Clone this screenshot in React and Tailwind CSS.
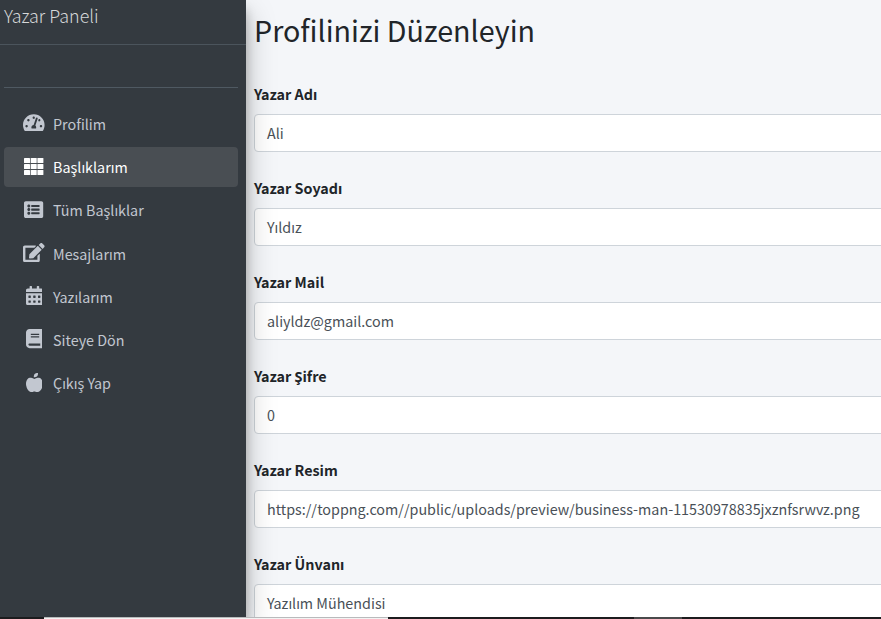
import {
  FaTachometerAlt,
  FaListAlt,
  FaEdit,
  FaCalendarAlt,
  FaBook,
  FaAppleAlt,
} from 'react-icons/fa';

function GridIcon({ className }) {
  const columns = [0, 6.7, 13.4];
  const rows = [0, 6, 12];
  return (
    <svg viewBox="0 0 20 17" className={className} fill="currentColor">
      {rows.map((y) =>
        columns.map((x) => (
          <rect key={`${x}-${y}`} x={x} y={y} width="6" height="5" rx="0.6" />
        )),
      )}
    </svg>
  );
}

const navItems = [
  { label: 'Profilim', Icon: FaTachometerAlt, size: 'h-[19.2px] w-[21.6px]' },
  { label: 'Başlıklarım', Icon: GridIcon, size: 'h-[17px] w-5', active: true },
  { label: 'Tüm Başlıklar', Icon: FaListAlt, size: 'h-[19.2px] w-[19.2px]' },
  { label: 'Mesajlarım', Icon: FaEdit, size: 'h-[19.2px] w-[21.6px]' },
  { label: 'Yazılarım', Icon: FaCalendarAlt, size: 'h-[19.2px] w-[16.8px]' },
  { label: 'Siteye Dön', Icon: FaBook, size: 'h-[19.2px] w-[16.8px]' },
  { label: 'Çıkış Yap', Icon: FaAppleAlt, size: 'h-[19.2px] w-[16.8px]' },
];

const fields = [
  { label: 'Yazar Adı', value: 'Ali' },
  { label: 'Yazar Soyadı', value: 'Yıldız' },
  { label: 'Yazar Mail', value: 'aliyldz@gmail.com' },
  { label: 'Yazar Şifre', value: '0' },
  {
    label: 'Yazar Resim',
    value: 'https://toppng.com//public/uploads/preview/business-man-11530978835jxznfsrwvz.png',
  },
  { label: 'Yazar Ünvanı', value: 'Yazılım Mühendisi' },
];

function NavItem({ label, Icon, size, active }) {
  return (
    <a
      className={
        'flex h-10 items-center rounded pl-4 ' +
        (active ? 'bg-[#494e53] text-white' : 'text-[#c2c7d0]')
      }
    >
      <span className="-mt-0.5 mr-[5px] flex w-7 shrink-0 justify-center">
        <Icon className={size} />
      </span>
      <span className="text-[14.34px] leading-6">{label}</span>
    </a>
  );
}

function Sidebar() {
  return (
    <aside className="relative z-10 w-[246px] shrink-0 bg-[#343a40] shadow-[0_14px_28px_rgba(0,0,0,0.25),0_10px_10px_rgba(0,0,0,0.22)]">
      <div className="h-[45px] border-b border-[#4b545c] pl-1 pt-0.5 text-[17.9px] font-light leading-[26px] text-[#d6d8d9]">
        Yazar Paneli
      </div>
      <div className="ml-1 mr-2 h-[43px] border-b border-[#4f5962]" />
      <nav className="ml-1 mr-2 mt-4 flex flex-col gap-[3.2px]">
        {navItems.map((item) => (
          <NavItem key={item.label} {...item} />
        ))}
      </nav>
    </aside>
  );
}

function Field({ label, value }) {
  return (
    <div className="h-[94px]">
      <label className="mb-2 block text-[14.34px] font-bold leading-6 text-[#212529]">{label}</label>
      <div className="flex h-[38px] items-center whitespace-nowrap rounded border border-[#ced4da] bg-white px-3 text-[14.34px] leading-6 text-[#495057]">
        {value}
      </div>
    </div>
  );
}

export default function App() {
  return (
    <div className="flex h-[619px] w-[881px] flex-col overflow-hidden bg-[#f4f6f9] font-['Noto_Sans_CJK_SC','Noto_Sans',sans-serif]">
      <div className="flex h-[617px] overflow-hidden">
        <Sidebar />
        <main className="-mr-4 min-w-0 flex-1 pl-2">
          <h1 className="h-[82px] pt-[9px] text-[28.67px] font-normal leading-[42px] text-[#212529]">
            Profilinizi Düzenleyin
          </h1>
          {fields.map((field) => (
            <Field key={field.label} {...field} />
          ))}
        </main>
      </div>
      <div className="relative z-20 flex h-0.5 bg-[#1c1c1e]">
        <div className="ml-11 h-0.5 w-[344px] border-t border-[#b9babc] bg-[#f3f3f3]" />
        <div className="ml-[246px] h-0.5 w-12 bg-[#4a4a4b]" />
      </div>
    </div>
  );
}
